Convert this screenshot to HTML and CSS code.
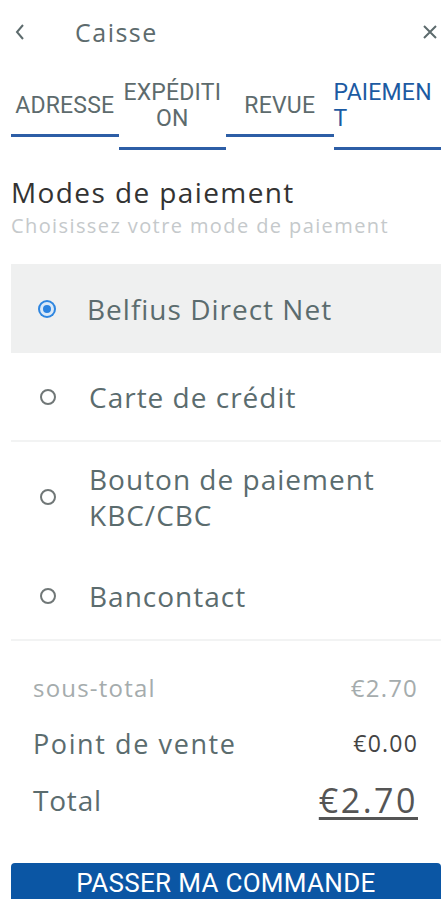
FILE: index.html
```html
<!DOCTYPE html>
<html lang="fr">
<head>
    <meta charset="UTF-8">
    <meta name="viewport" content="width=device-width, initial-scale=1.0">
    <title>Caisse</title>
    <link rel="stylesheet" href="styles.css">
</head>
<body>
    <div class="topbar">
        <svg class="back" width="12" height="18" viewBox="0 0 12 18"><path d="M9 2 L3 9 L9 16" fill="none" stroke="#5d6b6d" stroke-width="2"/></svg>
        <span class="title">Caisse</span>
        <svg class="close" width="16" height="16" viewBox="0 0 16 16"><path d="M2 2 L14 14 M14 2 L2 14" fill="none" stroke="#5d6b6d" stroke-width="2"/></svg>
    </div>

    <div class="tabs">
        <div class="tab">ADRESSE</div>
        <div class="tab">EXPÉDITION</div>
        <div class="tab">REVUE</div>
        <div class="tab active">PAIEMENT</div>
    </div>

    <h2 class="heading">Modes de paiement</h2>
    <p class="sub">Choisissez votre mode de paiement</p>

    <div class="methods">
        <div class="method selected"><span class="radio"></span><span class="label">Belfius Direct Net</span></div>
        <div class="method line"><span class="radio"></span><span class="label">Carte de crédit</span></div>
        <div class="method"><span class="radio"></span><span class="label">Bouton de paiement KBC/CBC</span></div>
        <div class="method line"><span class="radio"></span><span class="label">Bancontact</span></div>
    </div>

    <div class="totals">
        <div class="row small"><span>sous-total</span><span>€2.70</span></div>
        <div class="row mid"><span>Point de vente</span><span class="dark">€0.00</span></div>
        <div class="row big"><span>Total</span><span class="sum">€2.70</span></div>
    </div>

    <button class="order-btn">PASSER MA COMMANDE</button>
</body>
</html>
```

FILE: styles.css
```css
body {
    margin: 0;
    font-family: "Open Sans", Lato, sans-serif;
    background: #fff;
    color: #5b6c6e;
    padding: 0 2px 0 11px;
}
.topbar {
    display: flex;
    align-items: center;
    height: 64px;
}
.back {
    margin-left: 3px;
}
.title {
    margin-left: 49px;
    font-size: 25px;
    letter-spacing: 1.5px;
    color: #5d6b6d;
    flex: 1;
}
.close {
    margin-right: 3px;
}
.tabs {
    display: grid;
    grid-template-columns: repeat(4, 1fr);
    align-items: center;
    margin-top: 16px;
}
.tab {
    font-family: Roboto, sans-serif;
    font-size: 23px;
    line-height: 26px;
    letter-spacing: 0.2px;
    text-align: center;
    word-break: break-all;
    color: #5d6b6d;
    padding-bottom: 15px;
    border-bottom: 3px solid #2d5ea6;
}
.tab.active {
    color: #1c5aa2;
    text-align: left;
}
.heading {
    margin: 24px 0 0;
    font-weight: normal;
    font-size: 28px;
    line-height: 36px;
    letter-spacing: 1.4px;
    color: #333;
}
.sub {
    margin: 3px 0 0;
    font-size: 20px;
    line-height: 26px;
    letter-spacing: 1.4px;
    color: #c5c9cb;
}
.methods {
    margin-top: 25px;
}
.method {
    display: flex;
    align-items: center;
    min-height: 89px;
    box-sizing: border-box;
    padding: 19px 0;
}
.method.selected {
    background: #eff0f0;
}
.method.line {
    border-bottom: 2px solid #f2f3f3;
}
.radio {
    width: 12px;
    height: 12px;
    border: 2px solid #707777;
    border-radius: 50%;
    margin: 0 33px 0 29px;
    flex-shrink: 0;
}
.selected .radio {
    width: 8px;
    height: 8px;
    border: 3px solid #dbe9f7;
    background: #2b83e0;
    box-shadow: 0 0 0 2px #2e86e0;
}
.label {
    font-size: 28px;
    line-height: 36px;
    letter-spacing: 1px;
    color: #5b6c6e;
}
.totals {
    padding: 26px 23px 0 22px;
}
.row {
    display: flex;
    justify-content: space-between;
    align-items: center;
}
.row.small {
    font-size: 24px;
    height: 40px;
    letter-spacing: 1.2px;
    color: #a5acad;
}
.row.mid {
    font-size: 27px;
    height: 56px;
    margin-top: 8px;
    letter-spacing: 1.6px;
}
.row.mid .dark {
    font-size: 23px;
    letter-spacing: 1.2px;
    color: #444;
}
.row.big {
    font-size: 28px;
    height: 58px;
    letter-spacing: 0.8px;
}
.sum {
    font-size: 34px;
    letter-spacing: 2.5px;
    color: #555;
    text-decoration: underline;
    text-underline-offset: 4px;
}
.order-btn {
    display: block;
    width: 100%;
    height: 36px;
    margin-top: 34px;
    border: none;
    border-radius: 4px 4px 0 0;
    background: #0b56a4;
    color: #fff;
    font-family: Roboto, sans-serif;
    font-size: 26px;
    letter-spacing: 0.3px;
    padding: 4px 0 0;
    line-height: 30px;
}
```
